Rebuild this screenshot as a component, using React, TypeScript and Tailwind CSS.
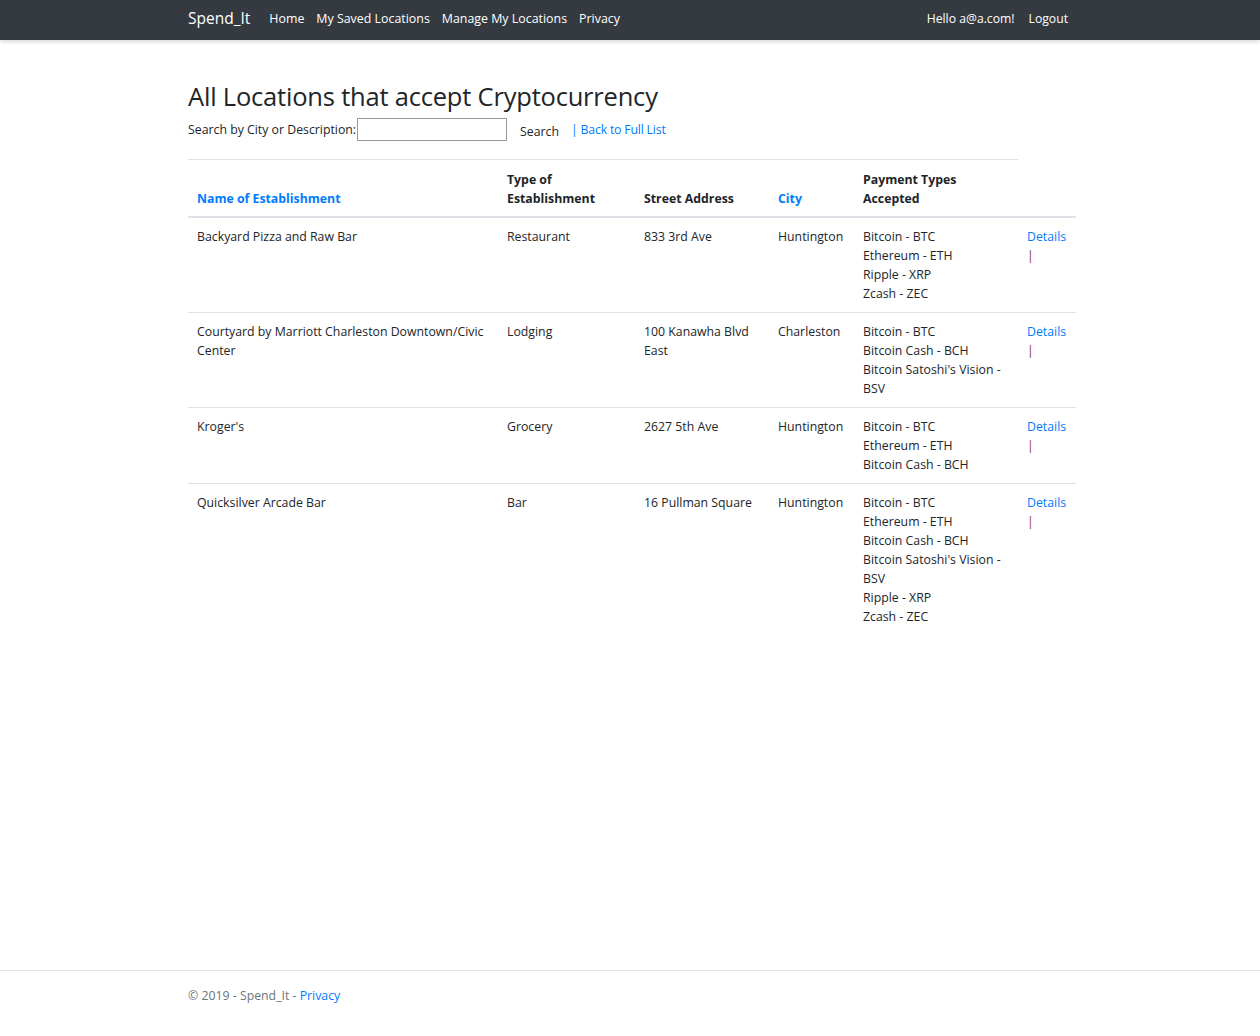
import React from "react"

const locations = [
  {
    name: "Backyard Pizza and Raw Bar",
    type: "Restaurant",
    address: "833 3rd Ave",
    city: "Huntington",
    payments: ["Bitcoin - BTC", "Ethereum - ETH", "Ripple - XRP", "Zcash - ZEC"],
  },
  {
    name: "Courtyard by Marriott Charleston Downtown/Civic Center",
    type: "Lodging",
    address: "100 Kanawha Blvd East",
    city: "Charleston",
    payments: ["Bitcoin - BTC", "Bitcoin Cash - BCH", "Bitcoin Satoshi's Vision - BSV"],
  },
  {
    name: "Kroger's",
    type: "Grocery",
    address: "2627 5th Ave",
    city: "Huntington",
    payments: ["Bitcoin - BTC", "Ethereum - ETH", "Bitcoin Cash - BCH"],
  },
  {
    name: "Quicksilver Arcade Bar",
    type: "Bar",
    address: "16 Pullman Square",
    city: "Huntington",
    payments: [
      "Bitcoin - BTC",
      "Ethereum - ETH",
      "Bitcoin Cash - BCH",
      "Bitcoin Satoshi's Vision - BSV",
      "Ripple - XRP",
      "Zcash - ZEC",
    ],
  },
]

const NavBar = () => (
  <nav className="h-10 bg-[#343a40] shadow-[0_2px_4px_rgba(0,0,0,0.15)]">
    <div className="w-[888px] ml-[188px] h-full flex items-center text-white">
      <a className="text-[15.5px] mr-[19px] -mt-[4px]">Spend_It</a>
      <div className="flex gap-[12px] text-[12.4px] -mt-[4px]">
        <a>Home</a>
        <a>My Saved Locations</a>
        <a>Manage My Locations</a>
        <a>Privacy</a>
      </div>
      <div className="ml-auto flex items-center gap-[14px] text-[12.2px] mr-[8px]">
        <span className="-mt-[4px]">Hello a@a.com!</span>
        <a className="-mt-[3px]">Logout</a>
      </div>
    </div>
  </nav>
)

const App = () => {
  return (
    <div
      className="min-h-screen flex flex-col bg-white text-[#212529] text-[12.3px] leading-[19px]"
      style={{ fontFamily: '"Open Sans", "Noto Sans", Arial, sans-serif' }}
    >
      <NavBar />
      <main className="flex-1">
        <div className="w-[888px] ml-[188px] pt-[38px]">
          <h1 className="text-[25.5px] leading-[36px] font-medium tracking-[-0.2px]">
            All Locations that accept Cryptocurrency
          </h1>
          <form className="flex items-center mt-[3px] h-[24px]">
            <label>Search by City or Description:</label>
            <input className="ml-[1px] w-[150px] h-[23px] border border-[#999] outline-none" />
            <button type="button" className="ml-[13px] mt-[4px]">Search</button>
            <a className="ml-[12px] text-[#007bff] tracking-[-0.2px]">| Back to Full List</a>
          </form>
          <table className="mt-[18px] w-full border-collapse table-fixed">
            <colgroup>
              <col className="w-[310px]" />
              <col className="w-[137px]" />
              <col className="w-[134px]" />
              <col className="w-[85px]" />
              <col className="w-[164px]" />
              <col />
            </colgroup>
            <thead>
              <tr className="border-b-2 border-[#dee2e6]">
                <th className="align-bottom text-left font-bold px-[9px] pt-[10px] pb-[8px] border-t border-[#dee2e6] text-[#007bff]">
                  Name of Establishment
                </th>
                <th className="align-bottom text-left font-bold px-[9px] pt-[10px] pb-[8px] border-t border-[#dee2e6]">
                  Type of Establishment
                </th>
                <th className="align-bottom text-left font-bold px-[9px] pt-[10px] pb-[8px] border-t border-[#dee2e6]">
                  Street Address
                </th>
                <th className="align-bottom text-left font-bold px-[9px] pt-[10px] pb-[8px] border-t border-[#dee2e6] text-[#007bff]">
                  City
                </th>
                <th className="align-bottom text-left font-bold px-[9px] pt-[10px] pb-[8px] border-t border-[#dee2e6]">
                  Payment Types Accepted
                </th>
                <th></th>
              </tr>
            </thead>
            <tbody>
              {locations.map((loc, i) => (
                <tr key={loc.name} className={i > 0 ? "border-t border-[#dee2e6] align-top" : "align-top"}>
                  <td className="px-[9px] py-[9px]">{loc.name}</td>
                  <td className="px-[9px] py-[9px]">{loc.type}</td>
                  <td className="px-[9px] py-[9px]">{loc.address}</td>
                  <td className="px-[9px] py-[9px]">{loc.city}</td>
                  <td className="px-[9px] py-[9px]">
                    {loc.payments.map((p) => (
                      <div key={p}>{p}</div>
                    ))}
                  </td>
                  <td className="px-[9px] py-[9px]">
                    <a className="text-[#007bff] block">Details</a>
                    <span className="text-[#8f2f2f]">|</span>
                  </td>
                </tr>
              ))}
            </tbody>
          </table>
        </div>
      </main>
      <footer className="border-t border-[#dee2e6] h-[66px]">
        <div className="w-[888px] ml-[188px] pt-[15px] text-[#6c757d]">
          © 2019 - Spend_It - <a className="text-[#007bff]">Privacy</a>
        </div>
      </footer>
    </div>
  )
}

export default App
